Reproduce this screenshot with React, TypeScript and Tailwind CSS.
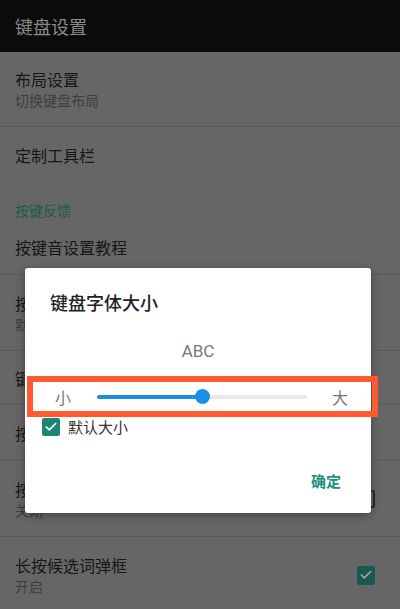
import { Check } from "lucide-react";

const cjk = { fontFamily: '"Noto Sans CJK SC", "Noto Sans", sans-serif' };

function Row({ title, sub, h, check }: { title: string; sub?: string; h: string; check?: "on" | "off" }) {
  return (
    <div className={`flex items-center justify-between border-b border-[#5b5b5b] px-[15px] ${h}`}>
      <div className="flex flex-col">
        <span className="text-[16px] leading-[22px] text-[#161616]">{title}</span>
        {sub && <span className="text-[14px] leading-[20px] text-[#3e3e3e]">{sub}</span>}
      </div>
      {check === "on" && (
        <div className="mr-[10px] flex h-[19px] w-[18px] items-center justify-center rounded-[2px] bg-[#1c584f]">
          <Check size={14} strokeWidth={3} className="text-[#a0a0a0]" />
        </div>
      )}
      {check === "off" && (
        <div className="mr-[10px] h-[18px] w-[18px] rounded-[2px] border-2 border-[#2a2a2a]" />
      )}
    </div>
  );
}

export default function App() {
  return (
    <div className="relative h-[609px] w-[400px] overflow-hidden bg-[#666666]" style={cjk}>
      <div className="flex h-[52px] items-center bg-[#0b0b0b] px-[15px]">
        <span className="text-[18px] text-[#8a8a8a]">键盘设置</span>
      </div>

      <Row title="布局设置" sub="切换键盘布局" h="h-[75px]" />
      <div className="flex h-[56px] items-center px-[15px]">
        <span className="text-[16px] text-[#161616]">定制工具栏</span>
      </div>
      <div className="h-[40px] px-[15px] pt-[14px]">
        <span className="text-[14px] leading-[20px] text-[#1c5a50]">按键反馈</span>
      </div>
      <Row title="按键音设置教程" h="h-[52px] pb-1" />
      <Row title="按键震动强度" sub="默认" h="h-[76px]" />
      <Row title="键盘字体大小" h="h-[54px]" />
      <Row title="按键弹出提示" h="h-[56px]" />
      <Row title="按键音效" sub="关闭" h="h-[76px]" check="off" />
      <Row title="长按候选词弹框" sub="开启" h="h-[76px] border-b-0" check="on" />

      {/* dialog */}
      <div className="absolute left-[25px] top-[268px] flex h-[245px] w-[346px] flex-col rounded-[3px] bg-white shadow-[0_2px_10px_rgba(0,0,0,0.35)]">
        <div className="pl-[25px] pt-[21px] text-[18px] font-medium leading-[26px] text-[#222]">键盘字体大小</div>
        <div className="mt-[24px] text-center text-[17px] leading-[24px] text-[#777]" style={{ fontFamily: "Roboto, sans-serif" }}>
          ABC
        </div>
        <div className="mt-[22px] flex h-[24px] items-center pl-[30px]">
          <span className="text-[16px] text-[#777]">小</span>
          <div className="relative ml-[26px] h-[4px] w-[210px] rounded-full bg-[#e8e8e8]">
            <div className="h-full w-[105px] rounded-full bg-[#1a8fe3]" />
            <div className="absolute left-[98px] top-[-6px] h-[15px] w-[15px] rounded-full bg-[#1a8fe3]" />
          </div>
          <span className="ml-[25px] text-[16px] text-[#777]">大</span>
        </div>
        <div className="mt-[8px] flex items-center pl-[17px]">
          <div className="flex h-[18px] w-[18px] items-center justify-center rounded-[2px] bg-[#1c8575]">
            <Check size={14} strokeWidth={3} className="text-white" />
          </div>
          <span className="ml-[8px] text-[15px] leading-[20px] text-[#333]">默认大小</span>
        </div>
        <div className="mt-auto flex justify-end pb-[21px] pr-[30px]">
          <span className="text-[15px] font-bold text-[#1f8f80]">确定</span>
        </div>
      </div>

      {/* annotation frame */}
      <div className="absolute left-[27px] top-[376px] h-[41px] w-[351px] border-[6px] border-[#ff5a30]" />
    </div>
  );
}
